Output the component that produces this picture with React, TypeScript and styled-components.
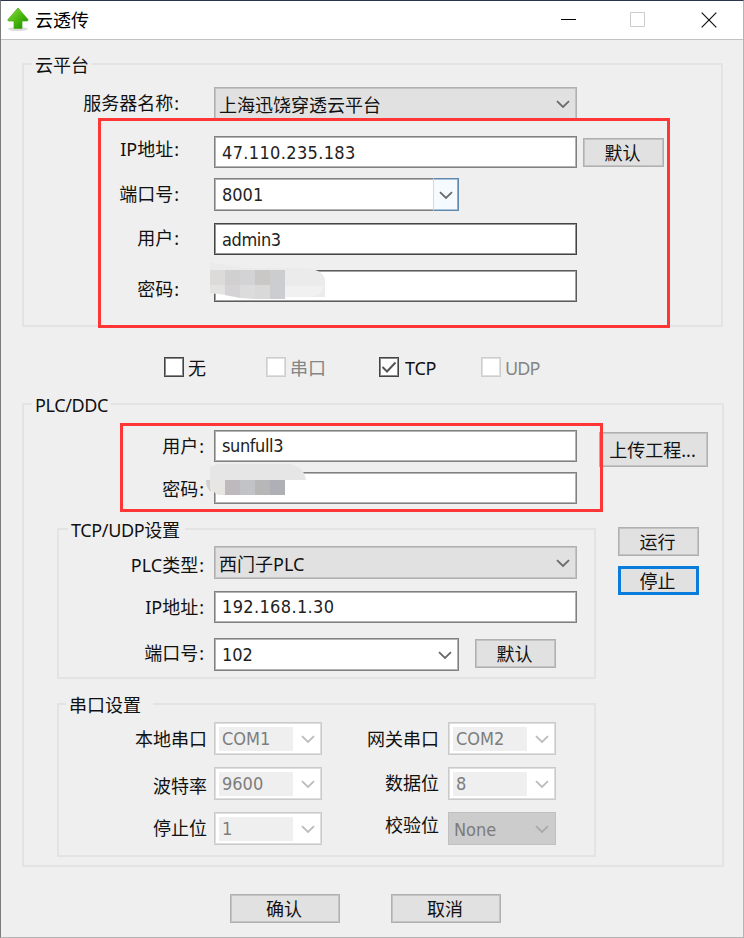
import React from 'react';
import styled, { createGlobalStyle, css } from 'styled-components';

const Global = createGlobalStyle`
  * { box-sizing: border-box; }
  body { margin: 0; background: #efefef; }
`;

const latinUi = '"Noto Sans", "Noto Sans CJK SC", sans-serif';
const latinValue = '"DejaVu Sans Condensed", "DejaVu Sans", "Noto Sans CJK SC", sans-serif';

const Window = styled.main`
  position: relative;
  width: 744px;
  height: 938px;
  display: flex;
  flex-direction: column;
  background: #efefef;
  border-top: 1px solid #29364b;
  border-left: 1px solid #7c7c7c;
  border-right: 1px solid #b4b4b4;
  border-bottom: 1px solid #b4b4b4;
  font: 18px/24px ${latinUi};
  color: #111;
  overflow: hidden;
`;

const TitleBar = styled.header`
  flex: none;
  height: 39px;
  display: flex;
  align-items: center;
  background: #fff;
  border-bottom: 1px solid #c3c3c3;
  padding: 0 26px 1px 5px;
`;

const Title = styled.h1`
  flex: 1;
  margin: 0 0 0 6px;
  font: inherit;
  color: #000;
`;

const Controls = styled.div`
  display: flex;
  align-items: center;
  gap: 54px;
  svg { display: block; }
  svg:last-child { margin-left: 2px; }
`;

const Group = styled.section<{ $top: number; $left: number; $width: number; $height: number }>`
  flex: none;
  width: ${p => p.$width}px;
  height: ${p => p.$height}px;
  margin: ${p => p.$top}px 0 0 ${p => p.$left}px;
  border: 2px solid #e3e3e3;
`;

const Legend = styled.h2<{ $left?: number; $width: number; $tracking?: number }>`
  width: ${p => p.$width}px;
  height: 24px;
  margin: -12px 0 -1px ${p => p.$left ?? 8}px;
  padding-left: 3px;
  background: #efefef;
  font: inherit;
  white-space: nowrap;
  letter-spacing: ${p => p.$tracking ?? 0}px;
`;

const Row = styled.div<{ $gap: number; $height?: number }>`
  display: flex;
  align-items: flex-start;
  height: ${p => p.$height ?? 32}px;
  margin-top: ${p => p.$gap}px;
`;

const Caption = styled.label<{ $width: number; $gap: number; $shift?: number; $colon?: boolean }>`
  flex: none;
  width: ${p => p.$width}px;
  margin: ${p => p.$shift ?? 0}px ${p => p.$gap}px 0 0;
  text-align: right;
  white-space: nowrap;
  ${p => p.$colon && css`
    padding-right: 2px;
    &::after { content: ':'; margin-left: 1px; }
  `}
`;

const Field = styled.div<{ $width?: number; $height?: number; $border?: string; $soft?: string; $tone?: 'white' | 'grey' | 'disabled'; $tracking?: number }>`
  position: relative;
  flex: none;
  display: flex;
  align-items: center;
  width: ${p => p.$width ?? 363}px;
  height: ${p => p.$height ?? 32}px;
  padding-left: 7px;
  border: 1px solid ${p => p.$border ?? '#808080'};
  box-shadow: inset 0 0 0 1px ${p => p.$soft ?? '#b4b4b4'};
  background: #fff;
  color: #222;
  font-family: ${latinValue};
  letter-spacing: ${p => p.$tracking ?? 0}px;
  white-space: nowrap;
  ${p => p.$tone === 'grey' && css`
    background: #e1e1e1;
    border-color: #b0b0b0;
    box-shadow: inset 0 0 0 1px #c3c3c3;
    padding-left: 4px;
    font-family: ${latinUi};
    color: #111;
  `}
  ${p => p.$tone === 'disabled' && css`
    background: #ccc;
    border-color: #c0c0c0;
    box-shadow: none;
    padding-left: 5px;
    color: #7b7b7b;
  `}
`;

const Value = styled.span<{ $shift?: number }>`
  flex: 1;
  padding-top: ${p => p.$shift ?? 0}px;
`;

const DimValue = styled.span`
  width: 74px;
  height: 24px;
  margin-left: -3px;
  padding-left: 3px;
  background: #efefef;
  color: #7d7d7d;
  line-height: 23px;
`;

const ArrowCell = styled.span<{ $hot?: boolean }>`
  flex: none;
  display: flex;
  align-items: center;
  justify-content: center;
  width: 25px;
  height: 33px;
  margin-left: auto;
  padding: 2px 1px 0 0;
  ${p => p.$hot && css`
    width: 26px;
    margin-right: -1px;
    padding: 1px 0 0;
    border: 1px solid #6089ad;
    border-left: 1px solid #bddff8;
    box-shadow: inset -1px 0 0 #8fadc8, inset 0 1px 0 #a9c3d9, inset 0 -1px 0 #a9c3d9;
    background: #f5fafe;
  `}
`;

const Button = styled.button<{ $width?: number; $height?: number; $left?: number; $top?: number; $focus?: boolean }>`
  flex: none;
  display: flex;
  align-items: center;
  justify-content: center;
  width: ${p => p.$width ?? 81}px;
  height: ${p => p.$height ?? 29}px;
  margin: ${p => p.$top ?? 0}px 0 0 ${p => p.$left ?? 0}px;
  padding: 1px 2px 0 0;
  border: 1px solid #b0b0b0;
  box-shadow: inset 0 0 0 1px #c3c3c3;
  background: #e1e1e1;
  color: #111;
  font: inherit;
  white-space: nowrap;
  ${p => p.$focus && css`
    border: 3px solid #0a7ddc;
    box-shadow: none;
  `}
`;

const Options = styled.div`
  display: grid;
  grid-template-columns: 102px 113px 102px 80px;
  height: 24px;
  margin: 29px 0 0 163px;
`;

const Option = styled.label<{ $dim?: boolean }>`
  display: flex;
  gap: 4px;
  color: ${p => (p.$dim ? '#858585' : '#111')};
`;

const Box = styled.span<{ $dim?: boolean }>`
  display: grid;
  place-items: center;
  width: 20px;
  height: 20px;
  margin-top: 1px;
  border: 1px solid ${p => (p.$dim ? '#cecece' : '#444')};
  box-shadow: inset 0 0 0 1px ${p => (p.$dim ? '#dedede' : '#8a8a8a')};
  background: #fff;
`;

const OptionText = styled.span<{ $tracking?: number; $left?: number }>`
  padding-left: ${p => p.$left ?? 0}px;
  letter-spacing: ${p => p.$tracking ?? 0}px;
`;

const Body = styled.div`
  display: flex;
`;

const SideActions = styled.div`
  display: flex;
  flex-direction: column;
  gap: 10px;
  padding: 23px 0 0 22px;
`;

const Footer = styled.footer`
  display: flex;
  gap: 51px;
  margin: 27px 0 0 229px;
`;

const Highlight = styled.div<{ $x: number; $y: number; $w: number; $h: number }>`
  position: absolute;
  left: ${p => p.$x}px;
  top: ${p => p.$y}px;
  width: ${p => p.$w}px;
  height: ${p => p.$h}px;
  border: 3px solid #ff3636;
  pointer-events: none;
`;

const Mask = styled.svg<{ $x: number; $y: number }>`
  position: absolute;
  left: ${p => p.$x}px;
  top: ${p => p.$y}px;
`;

const Chevron = ({ color = '#6a6a6a' }: { color?: string }) => (
  <svg width="14" height="9" viewBox="0 0 14 9" fill="none" stroke={color} strokeWidth="1.8">
    <path d="M1 1.200 7 7 13 1.200" />
  </svg>
);

const Combo = ({ text, hot = false }: { text: string; hot?: boolean }) => (
  <Field $width={245} $height={33}>
    <Value>{text}</Value>
    <ArrowCell $hot={hot}><Chevron /></ArrowCell>
  </Field>
);

const DimCombo = ({ text }: { text: string }) => (
  <Field $width={108} $height={33} $border="#cacaca" $soft="#dedede">
    <DimValue>{text}</DimValue>
    <ArrowCell><Chevron color="#bcbcbc" /></ArrowCell>
  </Field>
);

const ArrowLogo = () => (
  <svg width="23" height="25" viewBox="0 0 23 25">
    <defs>
      <linearGradient id="leaf" x1="0" y1="0" x2="1" y2="1">
        <stop offset="0" stopColor="#8ee044" />
        <stop offset=".5" stopColor="#4cb80e" />
        <stop offset="1" stopColor="#168a00" />
      </linearGradient>
    </defs>
    <ellipse cx="12" cy="22" rx="10" ry="2" fill="#dcdcdc" />
    <path d="M12 1 22 12.500q.6 1.300-1 1.500h-5v7.500H8V14H3q-1.700-.2-1-1.500Z" fill="url(#leaf)" stroke="#42a80c" strokeWidth=".7" />
  </svg>
);

export default function App() {
  return (
    <>
      <Global />
      <Window>
        <TitleBar>
          <ArrowLogo />
          <Title>云透传</Title>
          <Controls>
            <svg width="15" height="15"><path d="M0 7.500H15" stroke="#000" /></svg>
            <svg width="15" height="15"><path d="M.5 .5H14.500V14.500H.5Z" fill="none" stroke="#ccc" /></svg>
            <svg width="16" height="16"><path d="M.7 .7 15.300 15.300M15.300 .7 .7 15.300" stroke="#111" strokeWidth="1.200" /></svg>
          </Controls>
        </TitleBar>

        <Group $top={23} $left={21} $width={701} $height={264}>
          <Legend $width={60}>云平台</Legend>
          <Row $gap={11} $height={33}>
            <Caption $colon $width={157} $gap={33} $shift={4}>服务器名称</Caption>
            <Field $height={33} $tone="grey">
              <Value $shift={2}>上海迅饶穿透云平台</Value>
              <ArrowCell><Chevron /></ArrowCell>
            </Field>
          </Row>
          <Row $gap={16}>
            <Caption $colon $width={157} $gap={33} $shift={1}>IP地址</Caption>
            <Field $tracking={0.350}><Value $shift={1}>47.110.235.183</Value></Field>
            <Button $left={6} $top={2}>默认</Button>
          </Row>
          <Row $gap={10} $height={33}>
            <Caption $colon $width={157} $gap={33} $shift={4}>端口号</Caption>
            <Combo text="8001" hot />
          </Row>
          <Row $gap={12}>
            <Caption $colon $width={157} $gap={33} $shift={3}>用户</Caption>
            <Field $border="#444" $soft="#969696" $tracking={-0.400}><Value $shift={1}>admin3</Value></Field>
          </Row>
          <Row $gap={15}>
            <Caption $colon $width={157} $gap={33} $shift={7}>密码</Caption>
            <Field $border="#5c5c5c" $soft="#a2a2a2">
              <Mask $x={-5} $y={-12} width="118" height="41" viewBox="0 0 118 41">
                <path d="M0 3 34 9H98Q115 12 115 22V38H30L0 34Z" fill="#ebebeb" />
                <path d="M0 11H15V26H0Z" fill="#dcdbd9" />
                <path d="M15 11H30V26H15Z" fill="#d1d0d1" />
                <path d="M30 11H45V26H30Z" fill="#d3d3d5" />
                <path d="M45 11H60V26H45Z" fill="#cac8c7" />
                <path d="M60 11H75V26H60Z" fill="#cccdcf" />
                <path d="M0 26H15V35L0 34Z" fill="#e3e3e1" />
                <path d="M15 26H30V39L15 36Z" fill="#d5d3d5" />
                <path d="M30 26H45V40L30 39Z" fill="#dcdcdd" />
                <path d="M45 26H60V40H45Z" fill="#d9d9da" />
                <path d="M60 26H75V40H60Z" fill="#cbcdd0" />
                <path d="M75 27H114Q111 38 98 38H75Z" fill="#fbfbfb" opacity=".35" />
              </Mask>
            </Field>
          </Row>
        </Group>

        <Options>
          <Option><Box /><OptionText>无</OptionText></Option>
          <Option $dim><Box $dim /><OptionText>串口</OptionText></Option>
          <Option>
            <Box>
              <svg width="18" height="18" fill="none" stroke="#555" strokeWidth="2"><path d="M2.500 9 7 13.500 15.500 4.500" /></svg>
            </Box>
            <OptionText $left={2} $tracking={-0.200}>TCP</OptionText>
          </Option>
          <Option $dim><Box $dim /><OptionText $tracking={-0.900}>UDP</OptionText></Option>
        </Options>

        <Group $top={23} $left={21} $width={702} $height={464}>
          <Legend $width={79} $tracking={-0.400}>PLC/DDC</Legend>
          <Row $gap={14}>
            <Caption $colon $width={182} $gap={8} $shift={4}>用户</Caption>
            <Field $tracking={-0.400}><Value>sunfull3</Value></Field>
            <Button $width={109} $height={35} $left={22} $top={2}>上传工程...</Button>
          </Row>
          <Row $gap={10}>
            <Caption $colon $width={182} $gap={8} $shift={5}>密码</Caption>
            <Field>
              <Mask $x={-9} $y={-10} width="102" height="34" viewBox="0 0 102 34">
                <path d="M4 4 12 1H84Q98 4 100 17H4Z" fill="#e6e6e6" />
                <path d="M0 17H5V29Q0 25 0 17Z" fill="#d0d0d0" />
                <path d="M4 17H19V32H12L4 26Z" fill="#e7e6e2" />
                <path d="M19 17H34V32H19Z" fill="#beb9bc" />
                <path d="M34 17H49V32H34Z" fill="#c1c3c7" />
                <path d="M49 17H64V32H49Z" fill="#b8b7b7" />
                <path d="M64 17H79V32H64Z" fill="#aeb0b6" />
              </Mask>
            </Field>
          </Row>
          <Body>
            <div>
              <Group $top={24} $left={33} $width={539} $height={151}>
                <Legend $width={117} $left={9} $tracking={-0.350}>TCP/UDP设置</Legend>
                <Row $gap={5} $height={33}>
                  <Caption $colon $width={147} $gap={8} $shift={7}>PLC类型</Caption>
                  <Field $height={33} $tone="grey">
                    <Value $shift={2}>西门子PLC</Value>
                    <ArrowCell><Chevron /></ArrowCell>
                  </Field>
                </Row>
                <Row $gap={12}>
                  <Caption $colon $width={147} $gap={8} $shift={4}>IP地址</Caption>
                  <Field $tracking={0.350}><Value>192.168.1.30</Value></Field>
                </Row>
                <Row $gap={15} $height={33}>
                  <Caption $colon $width={147} $gap={8} $shift={3}>端口号</Caption>
                  <Combo text="102" />
                  <Button $left={16} $top={1}>默认</Button>
                </Row>
              </Group>
              <Group $top={24} $left={33} $width={539} $height={154}>
                <Legend $width={87} $left={7}>串口设置</Legend>
                <Row $gap={6} $height={33}>
                  <Caption $width={148} $gap={7} $shift={5}>本地串口</Caption>
                  <DimCombo text="COM1" />
                  <Caption $width={117} $gap={9} $shift={5}>网关串口</Caption>
                  <DimCombo text="COM2" />
                </Row>
                <Row $gap={12} $height={33}>
                  <Caption $width={148} $gap={7} $shift={7}>波特率</Caption>
                  <DimCombo text="9600" />
                  <Caption $width={117} $gap={9} $shift={4}>数据位</Caption>
                  <DimCombo text="8" />
                </Row>
                <Row $gap={12} $height={33}>
                  <Caption $width={148} $gap={7} $shift={4}>停止位</Caption>
                  <DimCombo text="1" />
                  <Caption $width={117} $gap={9} $shift={1}>校验位</Caption>
                  <Field $width={108} $height={33} $tone="disabled">
                    <Value $shift={2}>None</Value>
                    <ArrowCell><Chevron color="#aaa" /></ArrowCell>
                  </Field>
                </Row>
              </Group>
            </div>
            <SideActions>
              <Button>运行</Button>
              <Button $focus>停止</Button>
            </SideActions>
          </Body>
        </Group>

        <Footer>
          <Button $width={110}>确认</Button>
          <Button $width={110}>取消</Button>
        </Footer>

        <Highlight $x={97} $y={117} $w={572} $h={210} />
        <Highlight $x={119} $y={422} $w={483} $h={89} />
      </Window>
    </>
  );
}
